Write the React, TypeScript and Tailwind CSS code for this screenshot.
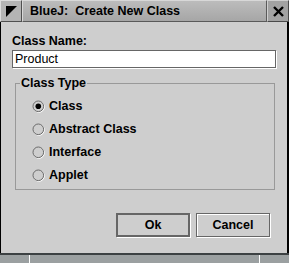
const types = ["Class", "Abstract Class", "Interface", "Applet"];

const Radio = ({ checked }: { checked: boolean }) => (
  <svg width="13" height="13" viewBox="0 0 13 13">
    <circle cx="7" cy="7" r="5.3" fill="none" stroke="#ffffff" strokeWidth="1" />
    <circle cx="6.3" cy="6.3" r="5.3" fill="#cecece" stroke="#6a6a6a" strokeWidth="1" />
    {checked && <circle cx="6.3" cy="6.3" r="2.8" fill="#000" />}
  </svg>
);

const TitleBar = () => (
  <div className="flex h-[22px] bg-[#adadad]">
    <div className="flex h-[22px] w-[22px] items-center justify-center border-t border-l border-t-[#dcdcdc] border-l-[#dcdcdc] border-r border-b border-r-[#505050] border-b-[#505050] bg-[#b4b4b4]">
      <svg width="11" height="11" viewBox="0 0 11 11">
        <polygon points="0,0 11,0 0,11" fill="#000" />
      </svg>
    </div>
    <div className="flex flex-1 items-center border-t border-l border-t-[#d8d8d8] border-l-[#d8d8d8] border-r border-b border-r-[#5a5a5a] border-b-[#5a5a5a] bg-gradient-to-b from-[#bcbcbc] to-[#a6a6a6] pl-[7px]">
      <span className="whitespace-pre text-[12.5px] font-bold leading-[15px] text-black">BlueJ:  Create New Class</span>
    </div>
    <div className="flex h-[22px] w-[22px] items-center justify-center border-t border-l border-t-[#cfcfcf] border-l-[#cfcfcf] border-r border-b border-r-[#4a4a4a] border-b-[#4a4a4a] bg-[#a2a2a2]">
      <svg width="11" height="11" viewBox="0 0 11 11">
        <path d="M1 1 L10 10 M10 1 L1 10" stroke="#000" strokeWidth="2.4" />
      </svg>
    </div>
  </div>
);

export default function App() {
  return (
    <div className="flex h-[263px] w-[289px] flex-col overflow-hidden bg-[#cecece] font-['Liberation_Sans',Arial,sans-serif] text-black">
      <TitleBar />
      <div className="flex flex-1 flex-col border-l border-r-2 border-black px-[11px] pt-[12px]">
        <label className="text-[12.5px] font-bold leading-[15px]">Class Name:</label>
        <div className="mt-[1px] flex h-[18px] items-center border border-[#666] bg-white pl-[2px] shadow-[1px_1px_0_#fff]">
          <span className="text-[12.5px] leading-[15px]">Product</span>
        </div>
        <fieldset className="mt-[8px] ml-[3px] mr-[1px] border border-[#999] pl-[4px] pr-0 pt-[4px] pb-[2px]">
          <legend className="px-[1px] text-[12.5px] font-bold leading-[15px]">Class Type</legend>
          <div className="flex flex-col pl-[12px]">
            {types.map((t, i) => (
              <div key={t} className="flex h-[23px] items-center gap-[4px]">
                <Radio checked={i === 0} />
                <span className="text-[12.5px] font-bold leading-[15px]">{t}</span>
              </div>
            ))}
          </div>
        </fieldset>
        <div className="mt-[23px] flex justify-end gap-[6px] pr-[6px]">
          <button className="flex h-[24px] w-[74px] items-center justify-center border-2 border-[#666] bg-[#cecece] text-[12.5px] font-bold shadow-[1px_1px_0_#fff]">
            Ok
          </button>
          <button className="flex h-[24px] w-[74px] items-center justify-center border border-[#666] bg-[#cecece] text-[12.5px] font-bold shadow-[1px_1px_0_#fff,inset_1px_1px_0_#fff]">
            Cancel
          </button>
        </div>
      </div>
      <div className="flex h-[10px] border-t-2 border-[#3c4143] bg-[#9ba0a1]">
        <div className="w-[30px] border-r border-white" />
        <div className="flex-1 border-r border-white" />
        <div className="w-[29px]" />
      </div>
    </div>
  );
}
